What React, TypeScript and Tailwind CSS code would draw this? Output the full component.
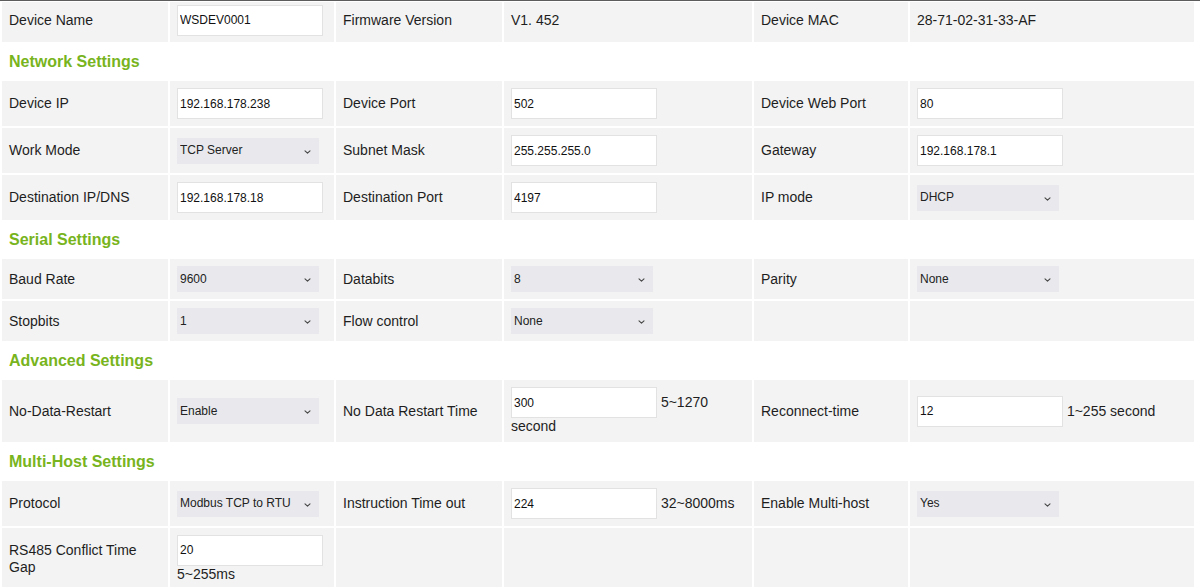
import React from 'react';

type CellKind =
  | { t: 'label'; v: string }
  | { t: 'text'; v: string }
  | { t: 'input'; v: string; note?: string }
  | { t: 'select'; v: string }
  | { t: 'empty' };

type Row = { kind: 'row'; h: string; cells: CellKind[] } | { kind: 'head'; title: string };

const L = (v: string): CellKind => ({ t: 'label', v });
const T = (v: string): CellKind => ({ t: 'text', v });
const I = (v: string, note?: string): CellKind => ({ t: 'input', v, note });
const S = (v: string): CellKind => ({ t: 'select', v });
const E: CellKind = { t: 'empty' };

const rows: Row[] = [
  { kind: 'row', h: 'h-[40px] pb-[4px]', cells: [L('Device Name'), I('WSDEV0001'), L('Firmware Version'), T('V1. 452'), L('Device MAC'), T('28-71-02-31-33-AF')] },
  { kind: 'head', title: 'Network Settings' },
  { kind: 'row', h: 'h-[45px]', cells: [L('Device IP'), I('192.168.178.238'), L('Device Port'), I('502'), L('Device Web Port'), I('80')] },
  { kind: 'row', h: 'h-[45px]', cells: [L('Work Mode'), S('TCP Server'), L('Subnet Mask'), I('255.255.255.0'), L('Gateway'), I('192.168.178.1')] },
  { kind: 'row', h: 'h-[45px]', cells: [L('Destination IP/DNS'), I('192.168.178.18'), L('Destination Port'), I('4197'), L('IP mode'), S('DHCP')] },
  { kind: 'head', title: 'Serial Settings' },
  { kind: 'row', h: 'h-[40px]', cells: [L('Baud Rate'), S('9600'), L('Databits'), S('8'), L('Parity'), S('None')] },
  { kind: 'row', h: 'h-[40px]', cells: [L('Stopbits'), S('1'), L('Flow control'), S('None'), E, E] },
  { kind: 'head', title: 'Advanced Settings' },
  { kind: 'row', h: 'h-[62px]', cells: [L('No-Data-Restart'), S('Enable'), L('No Data Restart Time'), I('300', '5~1270 second'), L('Reconnect-time'), I('12', '1~255 second')] },
  { kind: 'head', title: 'Multi-Host Settings' },
  { kind: 'row', h: 'h-[45px]', cells: [L('Protocol'), S('Modbus TCP to RTU'), L('Instruction Time out'), I('224', '32~8000ms'), L('Enable Multi-host'), S('Yes')] },
  { kind: 'row', h: 'h-[61px]', cells: [L('RS485 Conflict Time Gap'), I('20', '5~255ms'), E, E, E, E] },
];

function Chevron() {
  return (
    <svg width="7" height="4" viewBox="0 0 7 4" className="pointer-events-none absolute right-[8px] top-[12px]">
      <path d="M1 0.8l2.5 2.4 2.5-2.4" fill="none" stroke="#444" strokeWidth="1.1" strokeLinecap="round" strokeLinejoin="round" />
    </svg>
  );
}

function Content({ c }: { c: CellKind }) {
  if (c.t === 'label' || c.t === 'text') return <span>{c.v}</span>;
  if (c.t === 'select') {
    return (
      <div className="relative w-[142px]">
        <select
          defaultValue={c.v}
          className="block h-[26px] w-[142px] appearance-none rounded-none bg-[#e9e9ed] pl-[3px] text-[12px] text-[#222] outline-none"
        >
          <option>{c.v}</option>
        </select>
        <Chevron />
      </div>
    );
  }
  if (c.t === 'input') {
    return (
      <div className="w-full">
        <input
          defaultValue={c.v}
          className="inline-block h-[31px] w-[146px] border border-[#e2e2e2] bg-white px-[2px] align-baseline text-[12px] text-[#111] outline-none"
        />
        {c.note ? ' ' + c.note : null}
      </div>
    );
  }
  return null;
}

export default function App() {
  return (
    <div className="min-h-[587px] border-t border-[#5c5c5c] bg-white font-['Liberation_Sans',Arial,sans-serif]">
      <div className="grid w-[1196px] grid-cols-[166px_164px_166px_248px_154px_284px] gap-[2px] px-[2px] pt-[1px]">
        {rows.map((r, i) =>
          r.kind === 'head' ? (
            <div key={i} className="col-span-6 flex h-[35px] items-center px-[7px] pt-[1px] text-[16px] font-bold text-[#78b41d]">
              {r.title}
            </div>
          ) : (
            r.cells.map((c, j) => (
              <div
                key={`${i}-${j}`}
                className={`flex items-center bg-[#f3f3f3] px-[7px] text-[14px] leading-[17px] text-[#1e1e1e] ${r.h}`}
              >
                <Content c={c} />
              </div>
            ))
          )
        )}
      </div>
    </div>
  );
}
